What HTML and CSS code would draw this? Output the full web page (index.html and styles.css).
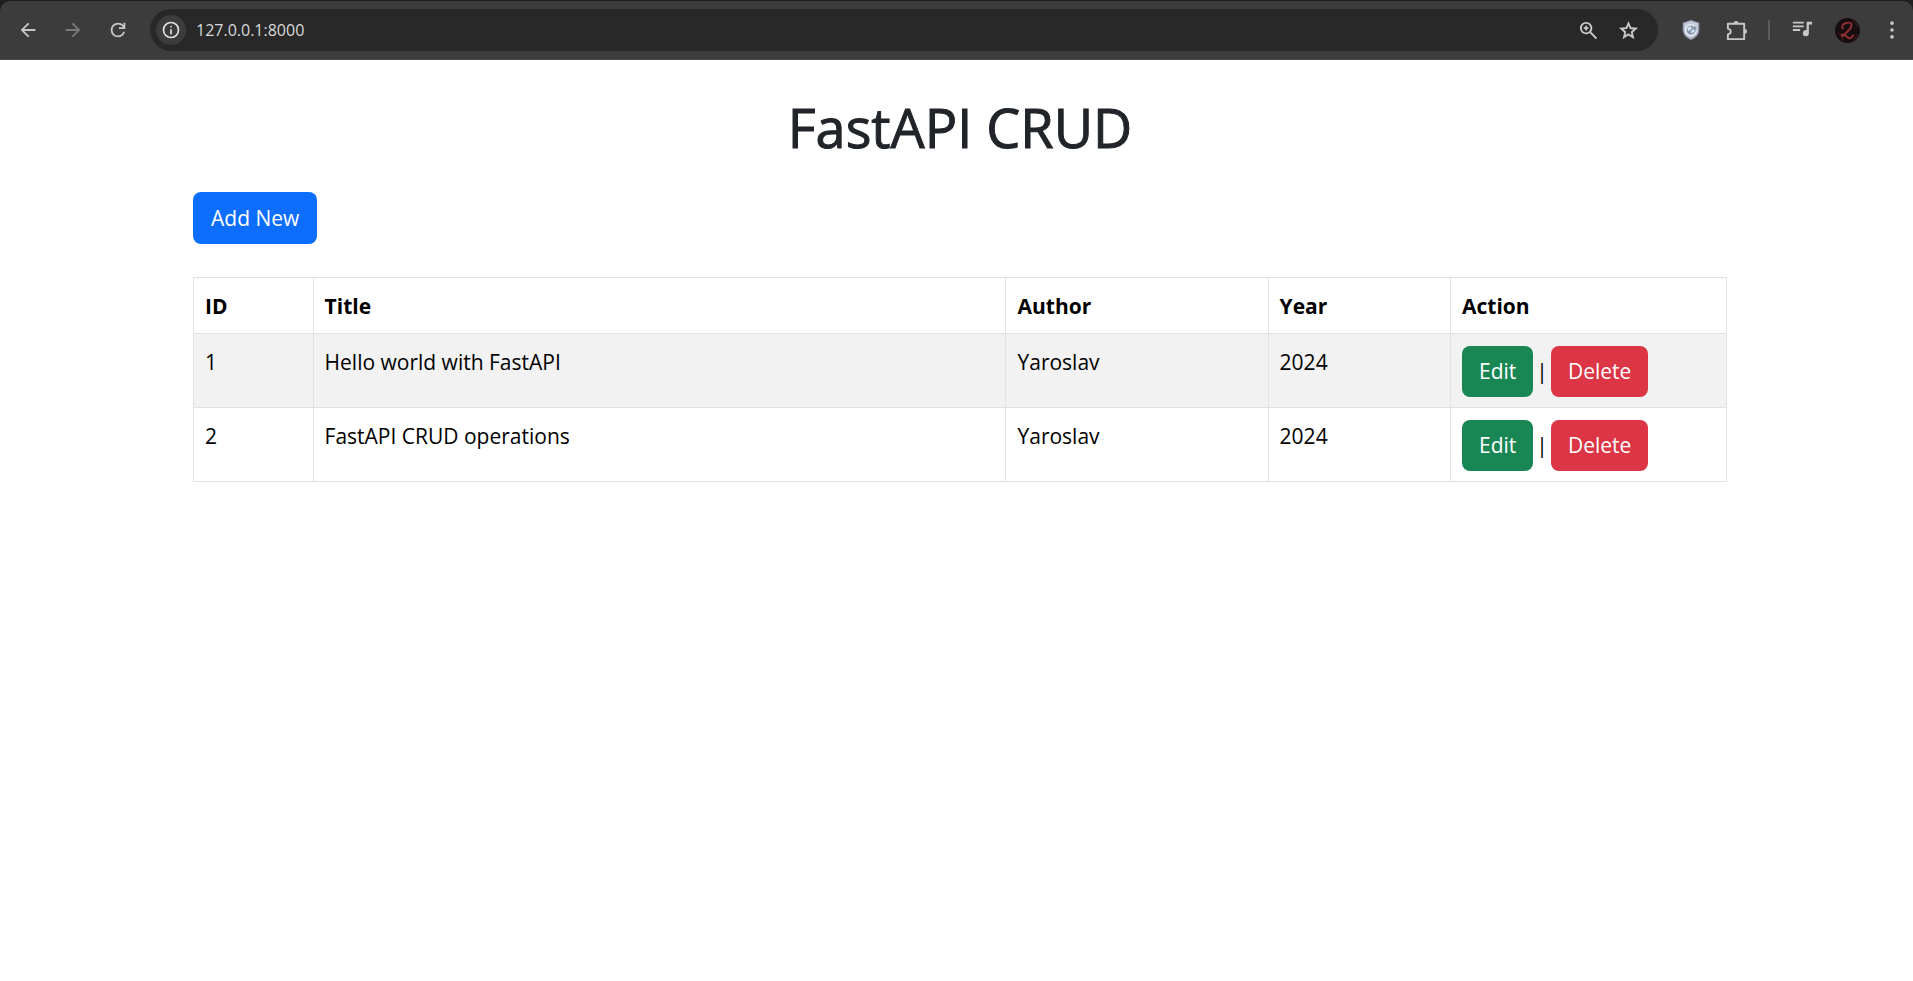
FILE: index.html
```html
<!DOCTYPE html>
<html lang="en">
<head>
<meta charset="utf-8">
<title>FastAPI CRUD</title>
<link rel="stylesheet" href="styles.css">
</head>
<body>
<header class="browser">
  <nav class="toolbar" aria-label="Browser toolbar">
    <button class="tool" aria-label="Back"><svg class="icon" viewBox="0 0 24 24"><path d="M20 11H7.8l5.6-5.6L12 4l-8 8 8 8 1.4-1.4L7.8 13H20z"/></svg></button>
    <button class="tool tool-off" aria-label="Forward"><svg class="icon" viewBox="0 0 24 24"><path d="M4 11h12.2l-5.6-5.6L12 4l8 8-8 8-1.4-1.4 5.6-5.6H4z"/></svg></button>
    <button class="tool" aria-label="Reload"><svg class="icon" viewBox="0 0 24 24"><path d="M12 20q-3.35 0-5.675-2.325T4 12t2.325-5.675T12 4q1.725 0 3.3.713T18 6.75V4h2v7h-7V9h4.2q-.8-1.4-2.188-2.2T12 6Q9.500 6 7.750 7.750T6 12t1.750 4.250T12 18q1.925 0 3.475-1.100T17.650 14h2.100q-.7 2.650-2.850 4.325T12 20z"/></svg></button>
    <div class="address">
      <button class="info" aria-label="Site information"><svg class="icon-s" viewBox="0 0 24 24"><path d="M11 17h2v-6h-2zm1-8q.43 0 .71-.29T13 8t-.29-.71T12 7t-.71.29T11 8t.29.710T12 9zm0 13q-4.150 0-7.075-2.925T2 12t2.925-7.075T12 2t7.075 2.925T22 12t-2.925 7.075T12 22zm0-2q3.350 0 5.675-2.325T20 12t-2.325-5.675T12 4 6.325 6.325 4 12t2.325 5.675T12 20z"/></svg></button>
      <input class="url" type="text" aria-label="Address" value="127.0.0.1:8000">
      <button class="inner" aria-label="Zoom"><svg class="icon icon-l" viewBox="0 0 24 24"><path d="M19.600 21l-6.300-6.300q-.75.6-1.725.95T9.500 16q-2.725 0-4.612-1.888T3 9.500t1.888-4.612T9.500 3t4.612 1.888T16 9.500q0 1.100-.35 2.075T14.700 13.300l6.300 6.300zM9.500 14q1.875 0 3.188-1.312T14 9.500t-1.312-3.188T9.500 5 6.312 6.312 5 9.500t1.312 3.188T9.500 14zm-1-2v-1.500H7v-2h1.500V7h2v1.500H12v2h-1.500V12z"/></svg></button>
      <button class="inner" aria-label="Bookmark"><svg class="icon icon-l" viewBox="0 0 24 24"><path d="M8.850 16.825l3.150-1.900 3.150 1.925-.825-3.600 2.775-2.400-3.650-.325-1.450-3.400-1.450 3.375-3.650.325 2.775 2.425zM5.825 21l1.625-7.025L2 9.250l7.200-.625L12 2l2.800 6.625 7.200.625-5.450 4.725L18.175 21 12 17.275z"/></svg></button>
    </div>
    <button class="tool" aria-label="Shield extension"><svg class="icon" viewBox="0 0 24 24"><path fill="#9aa1b2" d="M12 1l9 3v8q0 7-9 11-9-4-9-11V4z"/><path fill="#c6ccd9" d="M12 2.500l7.500 2.500v7q0 5.500-7.500 9.200-7.500-3.700-7.500-9.200V5z"/><circle cx="12" cy="12" r="6" fill="#8798ad"/><path d="M16 8A5.800 5.800 0 1 0 17.800 12" fill="none" stroke="#f2f4f8" stroke-width="1.500"/><path fill="#d9e4ee" d="M8 10l3-2 2 2-2 2-2 1zM12 13l3-2 1 2-3 3z"/></svg></button>
    <button class="tool" aria-label="Extensions"><svg class="icon icon-l" viewBox="0 0 24 24"><path fill="none" stroke="#c7c7c7" stroke-width="2" stroke-linejoin="round" d="M3 5h17v16H3v-5q3-.5 3-3t-3-3z"/><path d="M9 4.500a2.500 2.500 0 0 1 5 0zM20.500 10.500a2.500 2.500 0 0 1 0 5z"/></svg></button>
    <span class="divider"></span>
    <button class="tool" aria-label="Media controls"><svg class="icon" viewBox="0 0 24 24"><path d="M2 3h12v2H2zm0 4h12v2H2zm0 4h8v2H2zM17 3h6v3h-3.500V15.500a3.300 3.300 0 1 1-2.500-3.200z"/></svg></button>
    <button class="tool" aria-label="Profile"><svg class="avatar" viewBox="0 0 26 26"><circle cx="13" cy="13" r="13" fill="#170d0e"/><path d="M2 17q4-3 7 7M18 2q3 4 6 6M20 22l4-5" stroke="#321416" stroke-width="2" fill="none"/><path d="M8 11q-2-4 3-5.500t6 .5q1 3-3 7t-6 6q-2-2 0-2t5 3 6-2" fill="none" stroke="#8c3034" stroke-width="2" stroke-linecap="round"/></svg></button>
    <button class="tool" aria-label="Menu"><svg class="icon" viewBox="0 0 24 24"><circle cx="12" cy="4.500" r="2"/><circle cx="12" cy="12" r="2"/><circle cx="12" cy="19.500" r="2"/></svg></button>
  </nav>
</header>
<main class="page">
  <h1 class="title">FastAPI CRUD</h1>
  <a class="btn btn-primary" href="#">Add New</a>
  <table class="books">
    <colgroup><col class="c-id"><col class="c-title"><col class="c-author"><col class="c-year"><col class="c-action"></colgroup>
    <thead>
      <tr><th>ID</th><th>Title</th><th>Author</th><th>Year</th><th>Action</th></tr>
    </thead>
    <tbody>
      <tr>
        <td>1</td><td>Hello world with FastAPI</td><td>Yaroslav</td><td>2024</td>
        <td><div class="actions"><a class="btn btn-success" href="#">Edit</a><span>|</span><a class="btn btn-danger" href="#">Delete</a></div></td>
      </tr>
      <tr>
        <td>2</td><td>FastAPI CRUD operations</td><td>Yaroslav</td><td>2024</td>
        <td><div class="actions"><a class="btn btn-success" href="#">Edit</a><span>|</span><a class="btn btn-danger" href="#">Delete</a></div></td>
      </tr>
    </tbody>
  </table>
</main>
</body>
</html>
```
FILE: styles.css
```css
* { box-sizing: border-box; }
body {
  margin: 0;
  background: #fff;
  color: #212529;
  font: 400 21px/33px "Open Sans", "Noto Sans", sans-serif;
}
button, input { border: 0; padding: 0; margin: 0; background: none; font: inherit; }

.browser { background: #1f1f1f; padding-top: 1px; }
.toolbar {
  display: flex;
  align-items: center;
  gap: 9px;
  padding: 8px 3px 8px 10px;
  background: #3c3c3c;
  border-bottom: 1px solid #464646;
  border-radius: 10px 10px 0 0;
}
.tool, .info, .inner { display: flex; align-items: center; justify-content: center; flex: none; }
.tool { width: 36px; height: 36px; border-radius: 50%; }
.tool-off { opacity: 0.45; }
.icon { width: 22px; height: 22px; fill: #c7c7c7; }
.icon-l { width: 23px; height: 23px; }
.icon-s { width: 20px; height: 20px; fill: #e3e3e3; }
.avatar { width: 25px; height: 25px; }
.address {
  flex: 1;
  display: flex;
  align-items: center;
  gap: 10px;
  height: 42px;
  margin: 0 6px 0 5px;
  padding: 0 15px 0 6px;
  background: #282828;
  border-radius: 21px;
}
.info { width: 30px; height: 30px; border-radius: 50%; background: #3c3c3c; }
.inner { width: 30px; height: 30px; }
.url { flex: 1; min-width: 0; height: 30px; color: #dadada; font-size: 16px; }
.divider { width: 2px; height: 20px; margin: 0 5px; background: #5c5c5c; }

.page { padding: 34px 186px 0 193px; }
.title {
  margin: 0 0 32px;
  font-size: 54px;
  line-height: 66px;
  font-weight: 500;
  text-align: center;
  -webkit-text-stroke: 1px #212529;
}
.btn {
  display: inline-block;
  padding: 9px 17px;
  border-radius: 8px;
  color: #fff;
  text-decoration: none;
}
.btn-primary { padding: 10px 18px 9px; background: #0d6efd; }
.btn-success { background: #198754; }
.btn-danger { background: #dc3545; }

.books {
  width: 100%;
  margin-top: 33px;
  border-collapse: collapse;
  table-layout: fixed;
  color: #000;
}
.books th, .books td {
  padding: 12px 11px 10px;
  border: 1px solid #dee2e6;
  text-align: left;
  vertical-align: top;
}
.books th { font-weight: 700; }
.books tbody tr:nth-child(odd) { background: #f2f2f2; }
.c-id { width: 7.8%; }
.c-title { width: 45.2%; }
.c-author { width: 17.1%; }
.c-year { width: 11.9%; }
.c-action { width: 18%; }
.actions { display: flex; align-items: center; gap: 3px; }
```
